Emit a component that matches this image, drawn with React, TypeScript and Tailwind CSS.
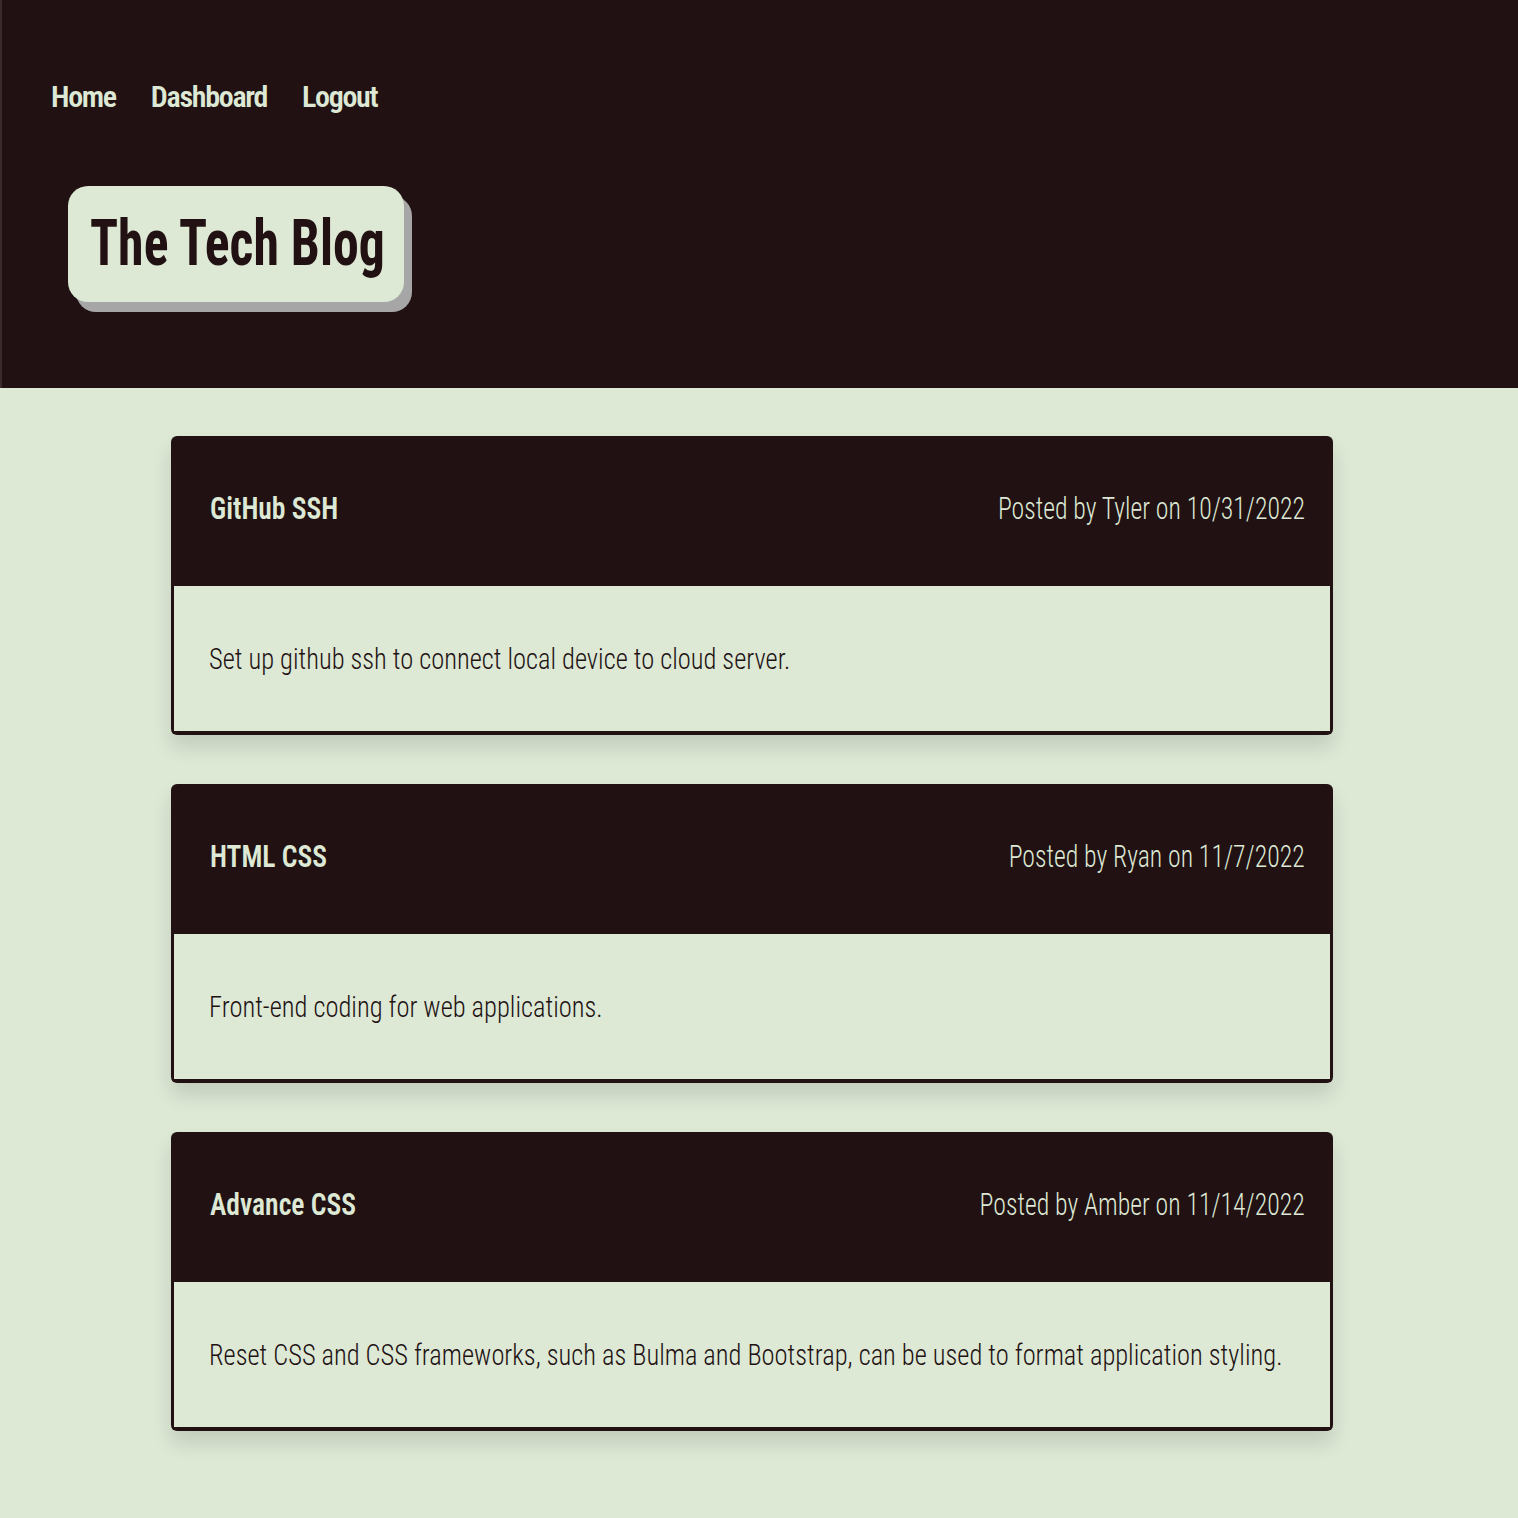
import React from "react";

const posts = [
  { title: "GitHub SSH", meta: "Posted by Tyler on 10/31/2022", body: "Set up github ssh to connect local device to cloud server." },
  { title: "HTML CSS", meta: "Posted by Ryan on 11/7/2022", body: "Front-end coding for web applications." },
  { title: "Advance CSS", meta: "Posted by Amber on 11/14/2022", body: "Reset CSS and CSS frameworks, such as Bulma and Bootstrap, can be used to format application styling." },
];

export default function App() {
  return (
    <div className="min-h-[1518px] bg-[#dde8d5] font-['Roboto',sans-serif] [font-stretch:condensed]">
      <header className="h-[388px] border-l-2 border-[#3a2c2c] bg-[#211112] pl-[49px] pt-[78px]">
        <nav className="flex gap-[35px] text-[30px] font-semibold leading-[38px] tracking-[-1.3px] text-[#dde8d5]">
          <a>Home</a>
          <a>Dashboard</a>
          <a>Logout</a>
        </nav>
        <div className="ml-[17px] mt-[70px] flex h-[116px] w-[336px] items-center rounded-[20px] bg-[#dde8d5] pl-[22px] shadow-[8px_10px_0_#a6a6a6]">
          <h1 className="inline-block origin-left scale-x-[0.81] whitespace-nowrap text-[64px] font-bold leading-none text-[#211112]">
            The Tech Blog
          </h1>
        </div>
      </header>
      <main className="ml-[171px] flex w-[1162px] flex-col gap-[49px] pt-[48px]">
        {posts.map((p) => (
          <div key={p.title} className="overflow-hidden rounded-[6px] shadow-[0_12px_20px_rgba(0,0,0,0.12)]">
            <div className="flex h-[150px] items-center justify-between bg-[#211112] pb-[4px] pl-[39px] pr-[28px] text-[31px] text-[#dde8d5]">
              <span className="inline-block origin-left scale-x-[0.89] whitespace-nowrap font-semibold">{p.title}</span>
              <span className="inline-block origin-right scale-x-[0.83] whitespace-nowrap font-light">{p.meta}</span>
            </div>
            <div className="flex h-[149px] items-center border-x-[3px] border-b-[4px] border-[#211112] bg-[#dde8d5] pl-[35px] text-[30px] font-light text-[#211112]">
              <span className="inline-block origin-left scale-x-[0.882] whitespace-nowrap">{p.body}</span>
            </div>
          </div>
        ))}
      </main>
    </div>
  );
}
